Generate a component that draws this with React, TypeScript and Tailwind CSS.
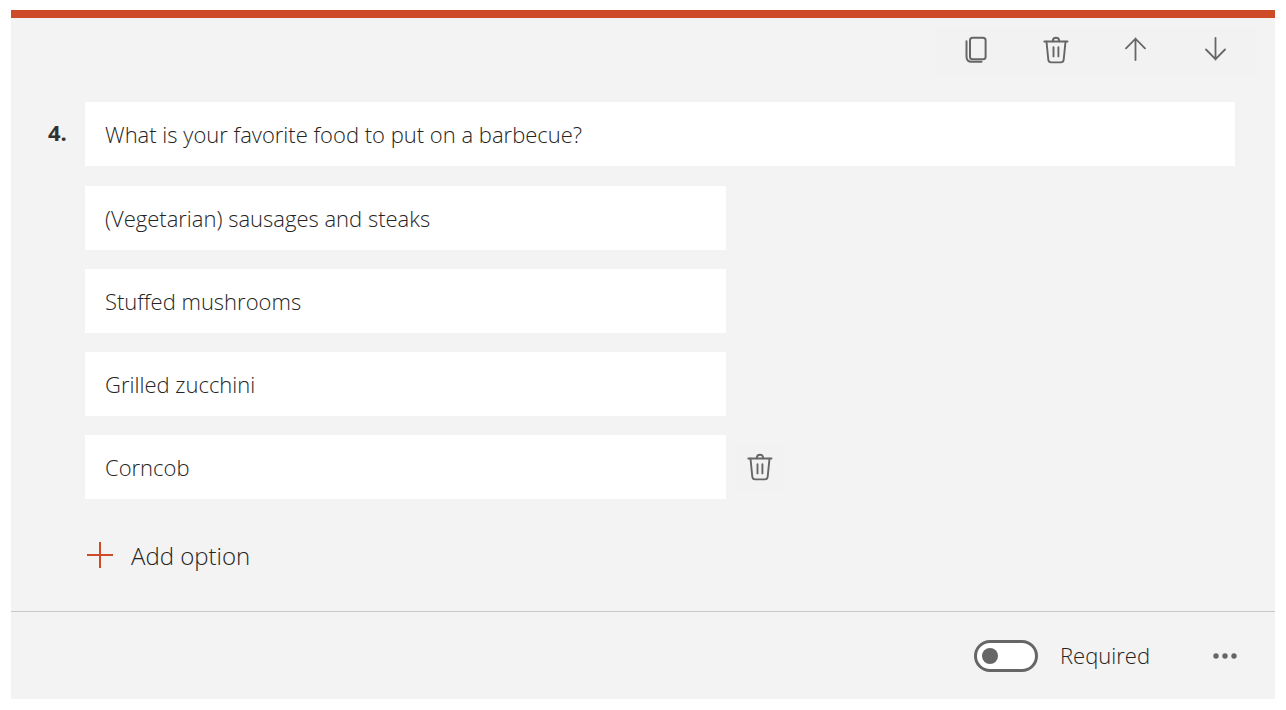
import { useState } from 'react'

const initialOptions = [
  '(Vegetarian) sausages and steaks',
  'Stuffed mushrooms',
  'Grilled zucchini',
  'Corncob',
]

function CopyIcon() {
  return (
    <svg width="28" height="28" viewBox="0 0 28 28" fill="none" stroke="currentColor" strokeWidth="2" strokeLinecap="round">
      <rect x="8" y="1.7" width="15.6" height="21.6" rx="2.6" />
      <path d="M4.5 5.3v15.2c0 3.2 2 5.3 5.2 5.3h9.8" />
    </svg>
  )
}

function TrashIcon() {
  return (
    <svg width="28" height="28" viewBox="0 0 28 28" fill="none" stroke="currentColor" strokeWidth="1.9" strokeLinecap="round">
      <path d="M2.3 5.5h23.2" />
      <path d="M10.8 5.2c0-2 1.3-3.4 3.2-3.4s3.2 1.4 3.2 3.4" />
      <path d="M4.5 5.7l1.8 18c.2 1.7 1.1 2.700 2.900 2.700h9.600c1.800 0 2.700-1 2.900-2.700l1.800-18" />
      <path d="M11.5 11.2v9.2M16.400 11.2v9.2" />
    </svg>
  )
}

function ArrowIcon({ down }: { down?: boolean }) {
  return (
    <svg width="28" height="28" viewBox="0 0 28 28" fill="none" stroke="currentColor" strokeWidth="1.8" strokeLinecap="round">
      {down
        ? <path d="M13.5 2v21.5M4 13.5l9.500 9.600 9.500-9.600" />
        : <path d="M13.5 2.500V24M4 12.300l9.500-9.600 9.500 9.600" />}
    </svg>
  )
}

export default function App() {
  const [title, setTitle] = useState('What is your favorite food to put on a barbecue?')
  const [options, setOptions] = useState(initialOptions)
  const [required, setRequired] = useState(false)

  function updateOption(index: number, value: string) {
    setOptions(options.map((o, i) => (i === index ? value : o)))
  }

  return (
    <main className="px-[11px] py-[10px] font-['Segoe_UI','Open_Sans',sans-serif] font-light text-[22px] text-[#252423]">
      <section className="bg-[#f3f3f3] border-t-8 border-[#ce4b27]">
        {/* Toolbar */}
        <div className="flex justify-end pt-2 pr-[19px] text-[#666]">
          <button aria-label="Copy question" className="w-20 h-12 flex items-center justify-center bg-[#f2f2f2]"><CopyIcon /></button>
          <button aria-label="Delete question" className="w-20 h-12 flex items-center justify-center bg-[#f2f2f2]"><TrashIcon /></button>
          <button aria-label="Move question up" className="w-20 h-12 flex items-center justify-center bg-[#f2f2f2]"><ArrowIcon /></button>
          <button aria-label="Move question down" className="w-20 h-12 flex items-center justify-center bg-[#f2f2f2]"><ArrowIcon down /></button>
        </div>

        {/* Question */}
        <div className="flex pt-7 pr-10">
          <div className="w-[74px] shrink-0 pl-[37px] pt-4 leading-[28px] font-bold text-[#323130]">4.</div>
          <div className="flex-1 min-w-0">
            <input aria-label="Question" value={title} onChange={e => setTitle(e.target.value)}
              className="block w-full h-16 px-5 bg-white outline-none" />

            <div className="flex flex-col gap-[19px] mt-5">
              {options.map((option, i) => (
                <div key={i} className="flex items-center gap-[10px]">
                  <input aria-label={`Option ${i + 1}`} value={option} onChange={e => updateOption(i, e.target.value)}
                    className="flex-1 min-w-0 max-w-[641px] h-16 px-5 bg-white outline-none" />
                  {i === options.length - 1 && (
                    <button aria-label="Delete option" onClick={() => setOptions(options.slice(0, -1))}
                      className="w-12 h-12 flex items-center justify-center bg-[#f2f2f2] text-[#666]">
                      <TrashIcon />
                    </button>
                  )}
                </div>
              ))}
            </div>

            <button onClick={() => setOptions([...options, ''])} className="flex items-center gap-4 h-8 mt-[41px] mb-[39px] text-[24px]">
              <svg width="30" height="30" viewBox="0 0 30 30" stroke="#ce4b27" strokeWidth="2">
                <path d="M2 14h26M15 1v26" />
              </svg>
              Add option
            </button>
          </div>
        </div>

        {/* Footer */}
        <div className="flex items-center justify-end h-[88px] border-t border-[#c8c8c8] pr-[30px]">
          <label className="flex items-center gap-[22px]">
            <input type="checkbox" checked={required} onChange={e => setRequired(e.target.checked)}
              className="appearance-none flex items-center w-16 h-8 px-[5px] rounded-full border-3 border-[#666] bg-white before:size-4 before:rounded-full before:bg-[#666] checked:justify-end" />
            Required
          </label>
          <button aria-label="More settings" className="flex items-center justify-center w-10 h-10 ml-[55px] text-[#666]">
            <svg width="26" height="8" viewBox="0 0 26 8" fill="currentColor">
              <circle cx="4" cy="4" r="2.7" />
              <circle cx="13" cy="4" r="2.7" />
              <circle cx="22" cy="4" r="2.7" />
            </svg>
          </button>
        </div>
      </section>
    </main>
  )
}
